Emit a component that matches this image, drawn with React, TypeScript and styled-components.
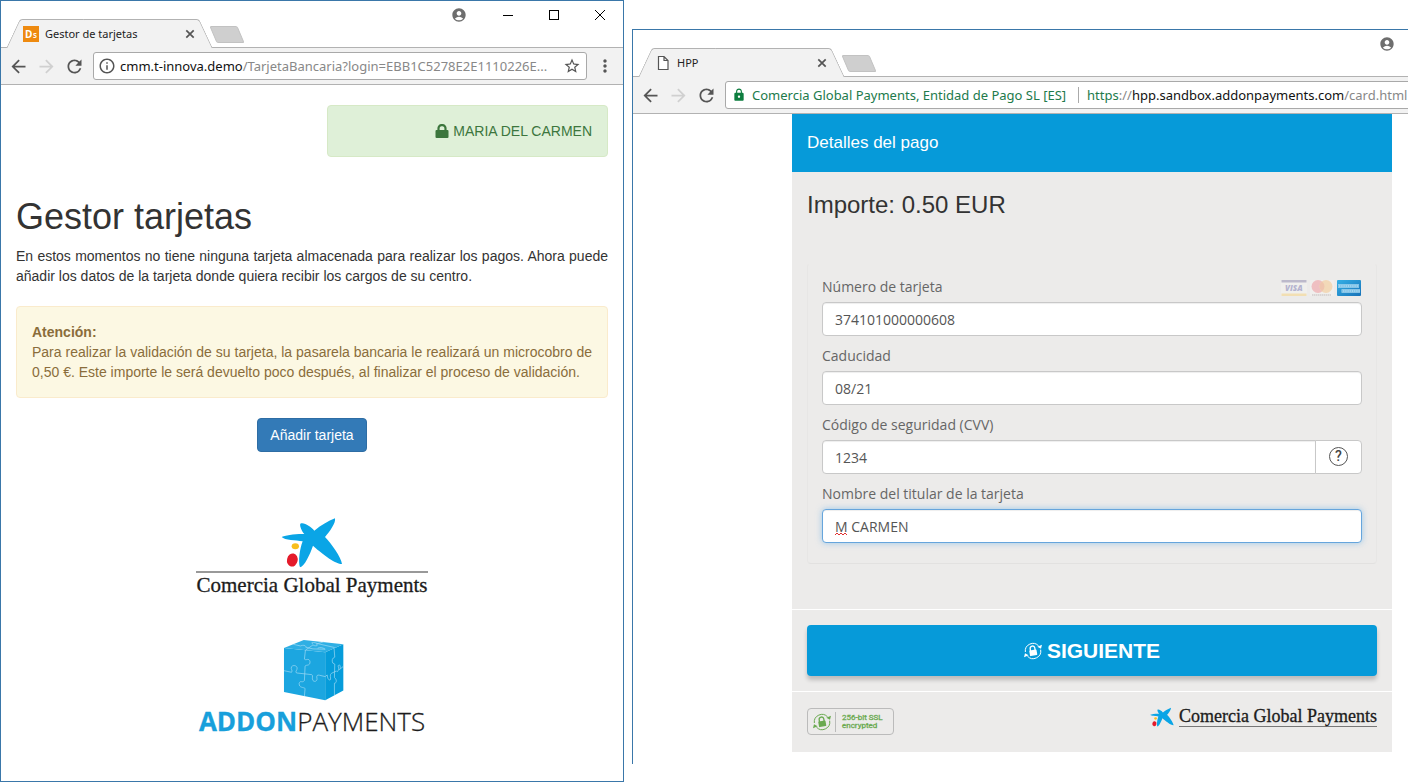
import React from "react";
import styled, { createGlobalStyle, css } from "styled-components";
import {
  MdAccountCircle,
  MdArrowBack,
  MdArrowForward,
  MdInfoOutline,
  MdLock,
  MdMoreVert,
  MdRefresh,
  MdStarBorder,
} from "react-icons/md";

const sans = '"Liberation Sans", Arial, sans-serif';
const ui = '"Open Sans", "Noto Sans", sans-serif';
const chromeFont = '"Noto Sans", "Open Sans", sans-serif';

const GlobalStyle = createGlobalStyle`
  *, *::before, *::after { box-sizing: border-box; }
  body { margin: 0; background: #fff; color: #333; font: 14px/20px ${sans}; }
  button, input { font: inherit; color: inherit; margin: 0; }
  h1, h2, p { margin: 0; font-weight: 400; }
  svg { display: block; flex: none; }
`;

const Desktop = styled.main`
  display: grid;
  grid-template-columns: minmax(0, 624fr) minmax(0, 776fr);
  gap: 8px;
  align-items: start;
`;

const Window = styled.section<{ $clipped?: boolean }>`
  border: 1px solid #3a77a9;
  background: #fff;
  overflow: hidden;
  ${(p) =>
    p.$clipped
      ? css`
          margin-top: 29px;
          padding-bottom: 12px;
          border-right: 0;
          border-bottom: 0;
        `
      : css`
          min-height: 100vh;
        `}
`;

/* ---------- browser chrome ---------- */

const TabStrip = styled.header`
  display: flex;
  align-items: flex-end;
  height: 47px;
  padding-left: 12px;
  border-bottom: 1px solid #b2b2b2;
  position: relative;
`;

const Tab = styled.div`
  position: relative;
  isolation: isolate;
  display: flex;
  align-items: center;
  width: 193px;
  height: 29px;
  margin-bottom: -1px;
  padding: 0 8px 0 10px;
  color: #222;

  &::before,
  &::after {
    content: "";
    position: absolute;
    z-index: -1;
    top: 0;
    bottom: 0;
    background: #f2f2f2;
    border-top: 1px solid #b2b2b2;
  }
  &::before {
    left: 0;
    right: 50%;
    border-left: 1px solid #b2b2b2;
    border-top-left-radius: 3px;
    transform: skewX(-25deg);
  }
  &::after {
    left: 40%;
    right: 0;
    border-right: 1px solid #b2b2b2;
    border-top-right-radius: 3px;
    transform: skewX(25deg);
  }
`;

const TabTitle = styled.span`
  flex: 1;
  margin-left: 6px;
  font: 11px/16px ${chromeFont};
  white-space: nowrap;
`;

const IconButton = styled.button<{ $w?: number; $color?: string }>`
  display: flex;
  align-items: center;
  justify-content: center;
  flex: none;
  width: ${(p) => p.$w ?? 28}px;
  height: 28px;
  padding: 0;
  border: 0;
  background: none;
  color: ${(p) => p.$color ?? "#555"};
`;

const NewTab = styled.button`
  width: 28px;
  height: 17px;
  margin: 0 0 4px 7px;
  padding: 0;
  border: 1px solid #c2c2c2;
  border-radius: 2px;
  background: #cfcfcf;
  transform: skewX(23deg);
`;

const WindowControls = styled.div`
  display: flex;
  align-self: flex-start;
  margin-left: auto;
`;

const Toolbar = styled.nav`
  display: flex;
  align-items: center;
  height: 37px;
  padding: 0 4px 0 3px;
  background: #f2f2f2;
  border-bottom: 1px solid #b2b2b2;
`;

const AddressBar = styled.div<{ $overflow?: boolean }>`
  display: flex;
  align-items: center;
  flex: 1;
  min-width: 0;
  height: 28px;
  margin-left: 5px;
  margin-right: ${(p) => (p.$overflow ? "-12px" : "4px")};
  padding-left: ${(p) => (p.$overflow ? "6px" : "4px")};
  overflow: hidden;
  background: #fff;
  border: 1px solid #a9a9a9;
  border-radius: 3px;
`;

const Address = styled.div<{ $spaced?: boolean }>`
  flex: 1;
  min-width: 0;
  margin-left: ${(p) => (p.$spaced ? "8px" : "4px")};
  overflow: hidden;
  color: #888;
  font: 13px/20px ${chromeFont};
  white-space: nowrap;
`;

const Host = styled.span`
  color: #111;
`;

const Secure = styled.span`
  color: #217a4b;
`;

const Issuer = styled.span`
  margin-left: 6px;
  padding-right: 12px;
  border-right: 1px solid #aaa;
  color: #217a4b;
  font: 13px/16px ${chromeFont};
  white-space: nowrap;
`;

/* ---------- card manager page ---------- */

const ManagerPage = styled.article`
  display: flex;
  flex-direction: column;
  padding: 20px 15px;
`;

const Alert = styled.div<{ $kind: "success" | "warning" }>`
  padding: 15px;
  border: 1px solid;
  border-radius: 4px;
  ${(p) =>
    p.$kind === "success"
      ? css`
          display: flex;
          align-items: center;
          justify-content: flex-end;
          gap: 4px;
          align-self: flex-end;
          width: calc(50% - 15px);
          color: #3c763d;
          background: #dff0d8;
          border-color: #d6e9c6;
        `
      : css`
          margin: 20px 0;
          color: #8a6d3b;
          background: #fcf8e3;
          border-color: #faebcc;
          text-align: justify;
        `}
`;

const PageTitle = styled.h1`
  margin-top: 40px;
  margin-bottom: 10px;
  font-size: 36px;
  line-height: 39px;
`;

const Intro = styled.p`
  text-align: justify;
`;

const AddButton = styled.button`
  align-self: center;
  height: 34px;
  padding: 0 12px;
  color: #fff;
  background: #337ab7;
  border: 1px solid #2e6da4;
  border-radius: 4px;
`;

const BrandStack = styled.div`
  display: flex;
  flex-direction: column;
  align-items: center;
`;

const StackedComercia = styled(BrandStack)`
  margin-top: 65px;
`;

const StackedAddon = styled(BrandStack)`
  margin-top: 42px;
`;

const ComerciaName = styled.span<{ $small?: boolean }>`
  color: #1c1c1c;
  font-family: "Liberation Serif", "Times New Roman", serif;
  white-space: nowrap;
  -webkit-text-stroke: 0.3px #1c1c1c;
  ${(p) =>
    p.$small
      ? css`
          font-size: 18px;
          line-height: 18px;
          border-bottom: 1px solid #777;
        `
      : css`
          margin-top: 3px;
          padding: 0 1px;
          border-top: 2px solid #999;
          font-size: 21px;
          line-height: 24px;
        `}
`;

const AddonName = styled.span`
  margin-top: 3px;
  color: #1c1c1c;
  font: 300 26px/34px ${ui};
  -webkit-text-stroke: 0.3px currentColor;

  b {
    color: #189fdb;
    font-weight: 700;
  }
`;

/* ---------- payment page ---------- */

const Panel = styled.form`
  width: calc(100% - 32px);
  max-width: 600px;
  margin: 0 16px 0 auto;
  background: #ecebea;
`;

const PanelHeader = styled.h2`
  padding: 0 15px;
  color: #fff;
  background: #069ad9;
  font-size: 17px;
  line-height: 58px;
`;

const PanelBody = styled.div`
  padding: 20px 15px 45px;
`;

const Amount = styled.p`
  margin-bottom: 45px;
  font-size: 24px;
  line-height: 26px;
`;

const CardFields = styled.fieldset`
  display: grid;
  gap: 10px;
  min-width: 0;
  margin: 0;
  padding: 13px 14px 20px;
  border: 1px solid #e7e6e5;
  border-top-color: transparent;
  border-bottom-color: #e2e1e0;
  border-radius: 4px;
  color: #666;
  font: 14px/20px ${ui};
`;

const Field = styled.div`
  display: grid;
  gap: 5px;
`;

const LabelRow = styled.div`
  display: flex;
  align-items: center;
  justify-content: space-between;
`;

const Schemes = styled.div`
  display: flex;
  gap: 3px;
  padding: 2px 1px 0 0;
`;

const InputGroup = styled.div`
  display: flex;
  position: relative;
`;

const TextInput = styled.input<{ $active?: boolean; $joined?: boolean }>`
  flex: 1;
  min-width: 0;
  height: 34px;
  padding: 0 12px;
  color: #555;
  background: #fff;
  border: 1px solid ${(p) => (p.$active ? "#66a5dc" : "#c8c8c8")};
  border-radius: ${(p) => (p.$joined ? "4px 0 0 4px" : "4px")};
  outline: 0;
  box-shadow: ${(p) =>
    p.$active
      ? "inset 0 1px 1px rgba(0,0,0,.07), 0 0 6px rgba(102,175,233,.6)"
      : "inset 0 1px 1px rgba(0,0,0,.07)"};
`;

const HelpButton = styled.button`
  display: flex;
  align-items: center;
  justify-content: center;
  width: 47px;
  height: 34px;
  margin-left: -1px;
  padding: 0 0 2px;
  background: #fff;
  border: 1px solid #c8c8c8;
  border-radius: 0 4px 4px 0;
`;

const HelpMark = styled.span`
  width: 19px;
  height: 19px;
  border: 1px solid #555;
  border-radius: 50%;
  color: #444;
  font: 500 14px/17px Roboto, sans-serif;
  text-align: center;
`;

const Squiggle = styled.svg`
  position: absolute;
  left: 13px;
  top: 23px;
`;

const PanelActions = styled.div`
  padding: 15px;
  border-top: 1px solid #fff;
  border-bottom: 1px solid #fff;
`;

const SubmitButton = styled.button`
  display: flex;
  align-items: center;
  justify-content: center;
  gap: 5px;
  width: 100%;
  height: 51px;
  border: 0;
  border-radius: 4px;
  color: #fff;
  background: #069ad9;
  box-shadow: 0 4px 4px rgba(0, 0, 0, 0.2);
  font-size: 21px;
  font-weight: 700;
`;

const PanelFooter = styled.footer`
  display: flex;
  align-items: flex-start;
  justify-content: space-between;
  padding: 15px 15px 17px;
`;

const SslBadge = styled.div`
  display: flex;
  align-items: center;
  width: 87px;
  height: 27px;
  margin-top: 1px;
  padding-left: 5px;
  border: 1px solid #bbb;
  border-radius: 4px;
  color: #6aaa50;
`;

const SslText = styled.span`
  display: flex;
  flex-direction: column;
  margin-left: 4px;
  padding: 2px 0 2px 6px;
  border-left: 1px solid #bbb;
  font: 400 8px/8px Roboto, sans-serif;
  -webkit-text-stroke: 0.3px currentColor;
  white-space: nowrap;
`;

const InlineComercia = styled.div`
  display: flex;
  gap: 5px;
`;

/* ---------- drawings ---------- */

const Star = ({ width, height }: { width: number; height: number }) => (
  <svg width={width} height={height} viewBox="305 52 186 153" aria-hidden="true">
    <path
      fill="#0aa5e6"
      d="M467 56C447 64 424 77 405 93C394 81 375 67 363 72C360 79 368 95 375 103C350 102 315 107 307 112C316 122 350 121 370 125C361 147 356 187 362 203C376 199 391 166 401 138C421 156 464 192 488 193C486 174 456 131 437 112C451 96 470 70 467 56Z"
    />
    <ellipse cx="348" cy="140" rx="11" ry="9" fill="#f8be1c" />
    <ellipse cx="339" cy="181" rx="16" ry="20" fill="#e41b2b" transform="rotate(12 339 181)" />
  </svg>
);

const PuzzleCube = () => (
  <svg width="65" height="62" viewBox="300 57 197 188" aria-hidden="true">
    <path fill="#1ca6e0" d="M312 84L437 97V243L312 218Z" />
    <path fill="#069cda" d="M437 97L492 73V213L437 243Z" />
    <path fill="#2fafe4" d="M312 84L372 60L492 73L437 97Z" />
    <g fill="none" stroke="#a5dcf4" strokeWidth="2">
      <path d="M377 91L374 118C378 124 388 112 391 126C391 140 380 134 376 139L374 183C366 192 362 180 358 192C358 206 370 202 376 207L374 230" />
      <path d="M312 153L335 158C340 152 331 149 335 141C340 135 351 137 352 145C352 153 345 155 350 160L396 165C402 168 395 177 400 183C406 189 414 183 412 176C410 168 413 165 420 167L437 171" />
      <path d="M437 171L443 166C444 178 449 184 453 180C455 174 449 166 456 161L471 154C476 161 480 145 476 139C481 128 486 145 480 150L492 140" />
      <path d="M464 86L466 112C459 114 456 122 460 130L466 133L465 174C472 178 473 191 465 191L465 227" />
      <path d="M340 73L362 78C371 74 380 77 378 82L400 87L437 88C429 82 420 82 414 85M432 66L410 72C420 77 406 80 400 75L377 91M400 72C389 66 404 66 414 71L466 83" />
    </g>
  </svg>
);

const SecureCycle = () => (
  <svg width="18" height="18" viewBox="0 0 54 54" aria-hidden="true">
    <g fill="none" stroke="currentColor" strokeWidth="3">
      <path d="M4 30A23 23 0 0 1 44 12" />
      <path d="M50 23A23 23 0 0 1 10 42" />
    </g>
    <path fill="currentColor" d="M54 8L51 20L40 14ZM0 46L3 34L14 40Z" />
    <g transform="rotate(-10 27 28)">
      <rect x="16" y="24" width="22" height="17" rx="2" fill="currentColor" />
      <path d="M20 26V19A7 7 0 0 1 34 19V26" fill="none" stroke="currentColor" strokeWidth="4" />
    </g>
  </svg>
);

const SolidLock = () => (
  <svg width="14" height="14" viewBox="0 0 14 14" aria-hidden="true">
    <rect x="0.5" y="6" width="13" height="8" rx="1" fill="currentColor" />
    <path d="M3.500 7V4.500A3 3 0 0 1 6.500 1.200H7.500A3 3 0 0 1 10.500 4.500V7" fill="none" stroke="currentColor" strokeWidth="2.200" />
  </svg>
);

const CloseMark = () => (
  <svg width="10" height="10" viewBox="0 0 10 10" aria-hidden="true">
    <path d="M1.300 1.300L8.700 8.700M8.700 1.300L1.300 8.700" stroke="currentColor" strokeWidth="1.700" />
  </svg>
);

const PageIcon = () => (
  <svg width="16" height="16" viewBox="0 0 16 16" aria-hidden="true">
    <path d="M3.500 1.500H9L13 5.500V14.500H3.500ZM9 1.500V5.500H13" fill="#fff" stroke="#555" strokeWidth="1.200" />
  </svg>
);

const Favicon = () => (
  <svg width="16" height="16" viewBox="0 0 16 16" aria-hidden="true">
    <rect width="16" height="16" fill="#ee8a10" />
    <text x="2" y="12" fill="#fff" fontFamily="Open Sans" fontWeight="700" fontSize="10">D</text>
    <text x="10" y="12" fill="#fff" fontFamily="Open Sans" fontWeight="600" fontSize="8">s</text>
  </svg>
);

const Visa = () => (
  <svg width="26" height="16" viewBox="0 0 26 16" role="img" aria-label="Visa">
    <rect width="26" height="16" rx="1" fill="#f0efed" />
    <rect x="0.500" width="25" height="2.500" fill="#bcb9cb" />
    <rect x="0.500" y="13.500" width="25" height="2.500" fill="#f2dfb3" />
    <text x="4" y="11" fill="#b4b3cf" fontFamily="Open Sans" fontWeight="800" fontStyle="italic" fontSize="8">VISA</text>
  </svg>
);

const Mastercard = () => (
  <svg width="24" height="16" viewBox="0 0 24 16" role="img" aria-label="Mastercard">
    <rect width="24" height="16" rx="1" fill="#f0efed" />
    <circle cx="8" cy="6.500" r="6.500" fill="#efbfc1" />
    <circle cx="16" cy="6.500" r="6.500" fill="#f2d9b8" />
    <path d="M12 1.400A6.500 6.500 0 0 1 12 11.600A6.500 6.500 0 0 1 12 1.400" fill="#efc5ae" />
    <path d="M2 15H21" stroke="#cfcccb" strokeWidth="1.500" strokeDasharray="1.500 0.500" />
  </svg>
);

const Amex = () => (
  <svg width="24" height="16" viewBox="0 0 24 16" role="img" aria-label="American Express">
    <defs>
      <linearGradient id="amex" x2="1" y2="1">
        <stop stopColor="#35b0e6" />
        <stop offset="1" stopColor="#1872b8" />
      </linearGradient>
    </defs>
    <rect width="24" height="16" rx="1" fill="url(#amex)" />
    <path d="M1 6H22M4.500 11H23" stroke="#a5d6f0" strokeWidth="3.600" />
    <path d="M1 6H22M5 11H23" stroke="#5aafde" strokeWidth="1.200" strokeDasharray="1.200 1" />
  </svg>
);

/* ---------- composition ---------- */

type ChromeProps = {
  title: string;
  icon: React.ReactNode;
  controls: React.ReactNode;
  address: React.ReactNode;
};

const BrowserChrome = ({ title, icon, controls, address }: ChromeProps) => (
  <>
    <TabStrip>
      <Tab>
        {icon}
        <TabTitle>{title}</TabTitle>
        <IconButton $w={16} aria-label="Cerrar pestaña"><CloseMark /></IconButton>
      </Tab>
      <NewTab aria-label="Nueva pestaña" />
      <WindowControls>{controls}</WindowControls>
    </TabStrip>
    <Toolbar>
      <IconButton aria-label="Atrás"><MdArrowBack size={21} /></IconButton>
      <IconButton aria-label="Adelante" $color="#d0d0d0"><MdArrowForward size={21} /></IconButton>
      <IconButton aria-label="Recargar"><MdRefresh size={21} /></IconButton>
      {address}
    </Toolbar>
  </>
);

const ManagerWindow = () => (
  <Window>
    <BrowserChrome
      title="Gestor de tarjetas"
      icon={<Favicon />}
      controls={
        <>
          <IconButton $w={52} $color="#6e6e6e" aria-label="Perfil"><MdAccountCircle size={16} /></IconButton>
          <IconButton $w={46} $color="#000" aria-label="Minimizar">
            <svg width="10" height="10"><path d="M0 5.500H10" stroke="currentColor" /></svg>
          </IconButton>
          <IconButton $w={46} $color="#000" aria-label="Maximizar">
            <svg width="10" height="10"><rect x="0.500" y="0.500" width="9" height="9" fill="none" stroke="currentColor" /></svg>
          </IconButton>
          <IconButton $w={46} $color="#000" aria-label="Cerrar">
            <svg width="10" height="10"><path d="M0 0L10 10M10 0L0 10" stroke="currentColor" /></svg>
          </IconButton>
        </>
      }
      address={
        <>
          <AddressBar>
            <MdInfoOutline size={18} color="#555" />
            <Address role="textbox" aria-label="Dirección">
              <Host>cmm.t-innova.demo</Host>/TarjetaBancaria?login=EBB1C5278E2E1110226E...
            </Address>
            <IconButton aria-label="Añadir a favoritos"><MdStarBorder size={18} /></IconButton>
          </AddressBar>
          <IconButton aria-label="Menú"><MdMoreVert size={20} /></IconButton>
        </>
      }
    />
    <ManagerPage>
      <Alert $kind="success">
        <SolidLock />
        MARIA DEL CARMEN
      </Alert>
      <PageTitle>Gestor tarjetas</PageTitle>
      <Intro>
        En estos momentos no tiene ninguna tarjeta almacenada para realizar los pagos. Ahora puede añadir los datos de
        la tarjeta donde quiera recibir los cargos de su centro.
      </Intro>
      <Alert $kind="warning">
        <strong>Atención:</strong>
        <br />
        Para realizar la validación de su tarjeta, la pasarela bancaria le realizará un microcobro de 0,50 €. Este
        importe le será devuelto poco después, al finalizar el proceso de validación.
      </Alert>
      <AddButton type="button">Añadir tarjeta</AddButton>
      <StackedComercia>
        <Star width={62} height={51} />
        <ComerciaName>Comercia Global Payments</ComerciaName>
      </StackedComercia>
      <StackedAddon>
        <PuzzleCube />
        <AddonName><b>ADDON</b>PAYMENTS</AddonName>
      </StackedAddon>
    </ManagerPage>
  </Window>
);

const PaymentWindow = () => (
  <Window $clipped>
    <BrowserChrome
      title="HPP"
      icon={<PageIcon />}
      controls={<IconButton $w={42} $color="#6e6e6e" aria-label="Perfil"><MdAccountCircle size={16} /></IconButton>}
      address={
        <AddressBar $overflow>
          <MdLock size={14} color="#0d7d3f" />
          <Issuer>Comercia Global Payments, Entidad de Pago SL [ES]</Issuer>
          <Address $spaced role="textbox" aria-label="Dirección">
            <Secure>https</Secure>://<Host>hpp.sandbox.addonpayments.com</Host>/card.html
          </Address>
        </AddressBar>
      }
    />
    <Panel>
      <PanelHeader>Detalles del pago</PanelHeader>
      <PanelBody>
        <Amount>Importe: 0.50 EUR</Amount>
        <CardFields>
          <Field>
            <LabelRow>
              <label htmlFor="number">Número de tarjeta</label>
              <Schemes><Visa /><Mastercard /><Amex /></Schemes>
            </LabelRow>
            <TextInput id="number" defaultValue="374101000000608" />
          </Field>
          <Field>
            <label htmlFor="expiry">Caducidad</label>
            <TextInput id="expiry" defaultValue="08/21" />
          </Field>
          <Field>
            <label htmlFor="cvv">Código de seguridad (CVV)</label>
            <InputGroup>
              <TextInput id="cvv" $joined defaultValue="1234" />
              <HelpButton type="button" aria-label="Ayuda"><HelpMark>?</HelpMark></HelpButton>
            </InputGroup>
          </Field>
          <Field>
            <label htmlFor="holder">Nombre del titular de la tarjeta</label>
            <InputGroup>
              <TextInput id="holder" $active defaultValue="M CARMEN" />
              <Squiggle width="12" height="4" viewBox="0 0 12 4" aria-hidden="true">
                <path d="M0 3L2 1L4 3L6 1L8 3L10 1L12 3" fill="none" stroke="#e03030" />
              </Squiggle>
            </InputGroup>
          </Field>
        </CardFields>
      </PanelBody>
      <PanelActions>
        <SubmitButton type="button"><SecureCycle />SIGUIENTE</SubmitButton>
      </PanelActions>
      <PanelFooter>
        <SslBadge>
          <SecureCycle />
          <SslText>
            <span>256-bit SSL</span>
            <span>encrypted</span>
          </SslText>
        </SslBadge>
        <InlineComercia>
          <Star width={24} height={20} />
          <ComerciaName $small>Comercia Global Payments</ComerciaName>
        </InlineComercia>
      </PanelFooter>
    </Panel>
  </Window>
);

export default function App() {
  return (
    <>
      <GlobalStyle />
      <Desktop>
        <ManagerWindow />
        <PaymentWindow />
      </Desktop>
    </>
  );
}
